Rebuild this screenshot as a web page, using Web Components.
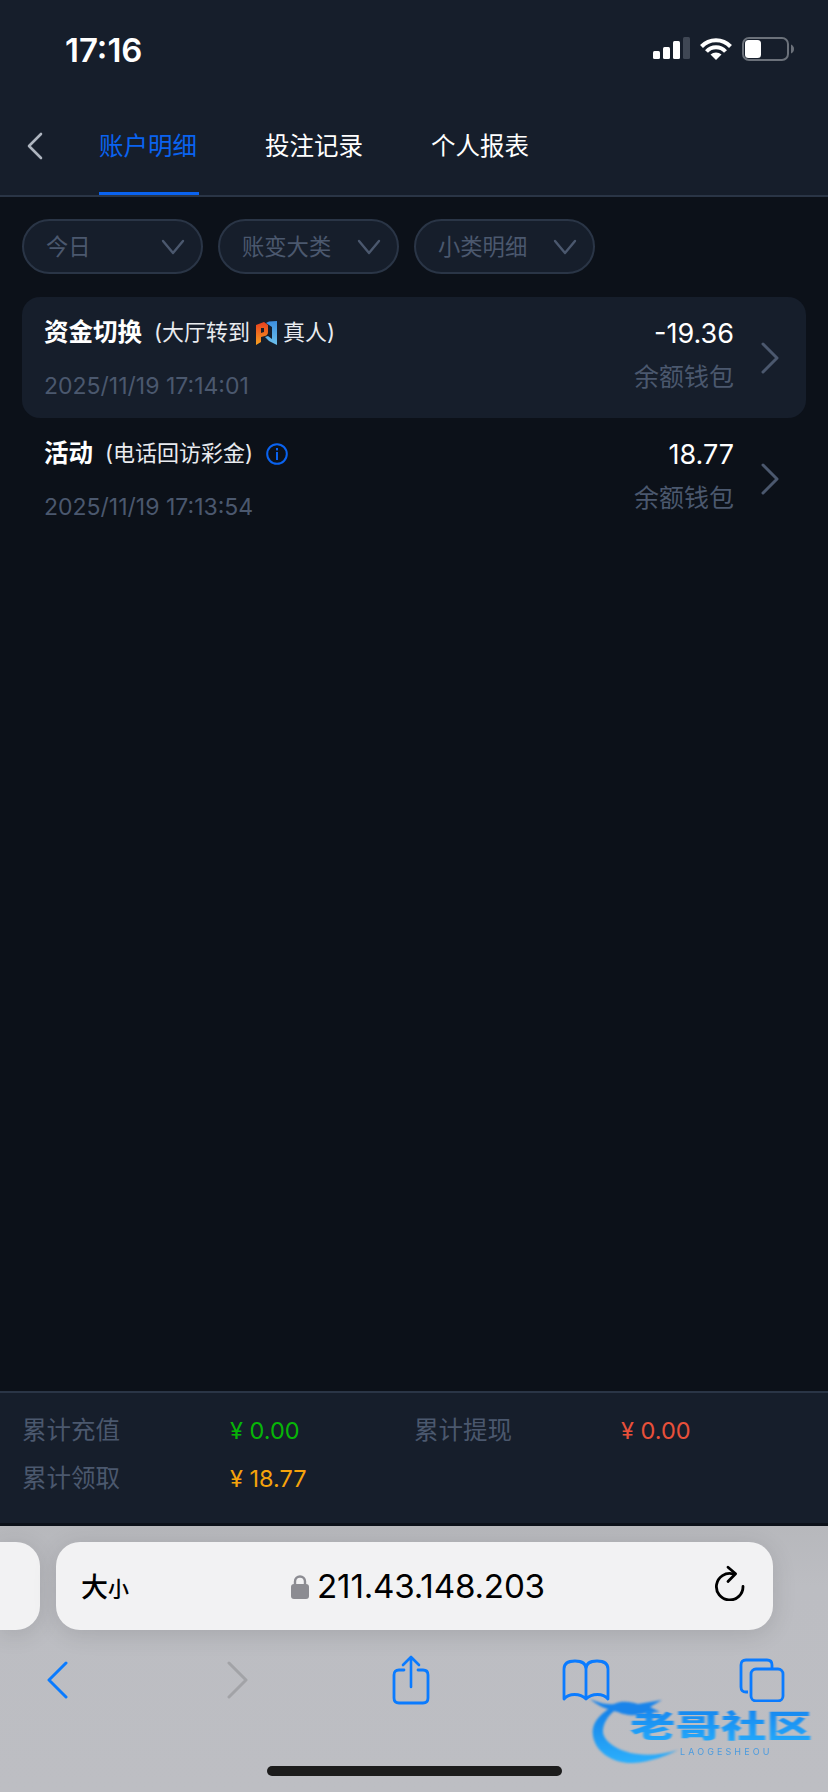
<!DOCTYPE html>
<html lang="zh">
<head>
<meta charset="utf-8">
<title>账户明细</title>
<style>
  html, body { margin: 0; padding: 0; }
  body {
    width: 828px;
    height: 1792px;
    overflow: hidden;
    background: #0c1119;
    color: #fff;
    font-family: Inter, "Noto Sans CJK SC", sans-serif;
  }
  #page { display: flex; flex-direction: column; height: 1792px; }
  #list { display: flex; flex-direction: column; flex: 1; }
</style>
</head>
<body>
<div id="page">
  <status-bar time="17:16"></status-bar>
  <nav-tabs>
    <tab-item active>账户明细</tab-item>
    <tab-item>投注记录</tab-item>
    <tab-item>个人报表</tab-item>
  </nav-tabs>
  <filter-bar>
    <filter-pill>今日</filter-pill>
    <filter-pill>账变大类</filter-pill>
    <filter-pill>小类明细</filter-pill>
  </filter-bar>
  <div id="list">
    <record-row selected title="资金切换" amount="-19.36" wallet="余额钱包" date="2025/11/19 17:14:01">
      <span>(大厅转到</span>
      <game-logo></game-logo>
      <span>真人)</span>
    </record-row>
    <record-row title="活动" amount="18.77" wallet="余额钱包" date="2025/11/19 17:13:54">
      <span>(电话回访彩金)</span>
      <info-icon></info-icon>
    </record-row>
  </div>
  <summary-bar></summary-bar>
  <safari-bar></safari-bar>
</div>

<script>
class StatusBar extends HTMLElement {
  constructor() {
    super();
    this.attachShadow({ mode: "open" });
    this.shadowRoot.innerHTML = `
      <style>
        :host { display: flex; align-items: center; justify-content: space-between; height: 98px; background: #161e2b; padding: 0 33px 0 65px; box-sizing: border-box; }
        .time { font-size: 33px; font-weight: 600; color: #fff; letter-spacing: 0; padding-top: 2px; }
        svg { display: block; }
      </style>
      <div class="time"></div>
      <svg width="142" height="26" viewBox="0 0 142 26">
        <rect x="0" y="15" width="7" height="8" rx="1.5" fill="#fff"/>
        <rect x="10" y="11" width="7" height="12" rx="1.5" fill="#fff"/>
        <rect x="20" y="5" width="7" height="18" rx="1.5" fill="#fff"/>
        <rect x="30" y="1" width="7" height="22" rx="1.5" fill="#3f4754"/>
        <path d="M48.5 10.5 A 20 20 0 0 1 77.5 10.5" fill="none" stroke="#fff" stroke-width="4"/>
        <path d="M53.5 15.5 A 13 13 0 0 1 72.5 15.5" fill="none" stroke="#fff" stroke-width="4"/>
        <path d="M63 24 L57.5 18.6 A 8 8 0 0 1 68.5 18.6 Z" fill="#fff"/>
        <rect x="90" y="2" width="45" height="22" rx="6" fill="none" stroke="#6b717a" stroke-width="2"/>
        <rect x="92" y="4" width="16" height="18" rx="3.5" fill="#fff"/>
        <path d="M138 8.5 Q141 10 141 13 Q141 16 138 17.5 Z" fill="#6b717a"/>
      </svg>`;
  }
  connectedCallback() {
    this.shadowRoot.querySelector(".time").textContent = this.getAttribute("time");
  }
}

class NavTabs extends HTMLElement {
  constructor() {
    super();
    this.attachShadow({ mode: "open" });
    this.shadowRoot.innerHTML = `
      <style>
        :host { display: flex; align-items: stretch; height: 99px; background: #161e2b; border-bottom: 2px solid #2a3546; box-sizing: border-box; padding-left: 26px; }
        svg { display: block; align-self: center; margin: 0 56px 2px 0; }
        .tabs { display: flex; gap: 66px; }
      </style>
      <svg width="17" height="28" viewBox="0 0 17 28"><path d="M15 2 L3 14 L15 26" fill="none" stroke="#aeb5bf" stroke-width="2.6" stroke-linecap="round" stroke-linejoin="round"/></svg>
      <div class="tabs"><slot></slot></div>`;
  }
}

class TabItem extends HTMLElement {
  constructor() {
    super();
    this.attachShadow({ mode: "open" });
    this.shadowRoot.innerHTML = `
      <style>
        :host { display: flex; align-items: center; width: 100px; font-size: 24.5px; color: #fff; box-sizing: border-box; padding-bottom: 2px; border-bottom: 3px solid transparent; white-space: nowrap; }
        :host([active]) { color: #0a63f0; border-bottom-color: #0a63f0; }
      </style>
      <slot></slot>`;
  }
}

class FilterBar extends HTMLElement {
  constructor() {
    super();
    this.attachShadow({ mode: "open" });
    this.shadowRoot.innerHTML = `
      <style>
        :host { display: flex; gap: 15px; padding: 22px 22px 23px; }
      </style>
      <slot></slot>`;
  }
}

class FilterPill extends HTMLElement {
  constructor() {
    super();
    this.attachShadow({ mode: "open" });
    this.shadowRoot.innerHTML = `
      <style>
        :host { display: flex; align-items: center; justify-content: space-between; box-sizing: border-box; width: 181px; height: 55px; padding: 0 16px 0 22px; border: 2px solid #2a3546; border-radius: 27.5px; background: #161e2b; color: #4b586e; font-size: 22.3px; }
        .label { padding-bottom: 4px; }
        svg { display: block; }
      </style>
      <span class="label"><slot></slot></span>
      <svg width="24" height="16" viewBox="0 0 24 16"><path d="M2 2 L12 14 L22 2" fill="none" stroke="#4b586e" stroke-width="2.4" stroke-linecap="round" stroke-linejoin="round"/></svg>`;
  }
}

class RecordRow extends HTMLElement {
  constructor() {
    super();
    this.attachShadow({ mode: "open" });
    this.shadowRoot.innerHTML = `
      <style>
        :host { display: flex; box-sizing: border-box; height: 121px; margin: 0 22px; padding: 18px 26px 0 22px; border-radius: 18px; justify-content: space-between; }
        :host([selected]) { background: #161e2b; }
        .left { display: flex; flex-direction: column; }
        .head { display: flex; align-items: center; height: 30px; color: #fff; font-size: 22px; white-space: nowrap; }
        .title { font-size: 24.5px; font-weight: 700; margin-right: 12px; }
        .sub { display: flex; align-items: center; gap: 6px; color: #e9ebef; }
        .date { margin-top: 26px; line-height: 30px; font-size: 23px; color: #4b586e; }
        .right { display: flex; align-items: flex-start; padding-top: 4px; }
        .values { display: flex; flex-direction: column; align-items: flex-end; }
        .amount { font-size: 27px; line-height: 30px; color: #fff; }
        .wallet { margin-top: 13px; font-size: 25px; line-height: 30px; color: #4b586e; }
        svg { display: block; margin: 23px 0 0 26px; }
      </style>
      <div class="left">
        <div class="head"><span class="title"></span><span class="sub"><slot></slot></span></div>
        <div class="date"></div>
      </div>
      <div class="right">
        <div class="values"><div class="amount"></div><div class="wallet"></div></div>
        <svg width="20" height="32" viewBox="0 0 20 32"><path d="M3 2 L17 16 L3 30" fill="none" stroke="#4b586e" stroke-width="3" stroke-linecap="round" stroke-linejoin="round"/></svg>
      </div>`;
  }
  connectedCallback() {
    const root = this.shadowRoot;
    root.querySelector(".title").textContent = this.getAttribute("title");
    root.querySelector(".amount").textContent = this.getAttribute("amount");
    root.querySelector(".wallet").textContent = this.getAttribute("wallet");
    root.querySelector(".date").textContent = this.getAttribute("date");
    this.removeAttribute("title");
  }
}

class GameLogo extends HTMLElement {
  constructor() {
    super();
    this.attachShadow({ mode: "open" });
    this.shadowRoot.innerHTML = `
      <style>:host { display: block; width: 21px; height: 24px; margin: 5px 0 0 0; } svg { display: block; }</style>
      <svg width="21" height="24" viewBox="0 0 21 24">
        <defs>
          <linearGradient id="o" x1="0" y1="0" x2="0" y2="1"><stop offset="0" stop-color="#e8401f"/><stop offset="1" stop-color="#f6a020"/></linearGradient>
          <linearGradient id="b" x1="0" y1="0" x2="0" y2="1"><stop offset="0" stop-color="#3c8fe0"/><stop offset="1" stop-color="#6cc0ec"/></linearGradient>
        </defs>
        <path d="M0 4 L8 1 L12 4 L12 11 Q12 14 9 15 L5 16 L5 21 L0 24 Z M5 7 L5 12 L8 11 L8 7 Z" fill="url(#o)" fill-rule="evenodd"/>
        <path d="M21 0 L21 24 L13 20 L9 16 L12 15 L16 18 L16 6 L10 2 L13 0.5 Z" fill="url(#b)"/>
      </svg>`;
  }
}

class InfoIcon extends HTMLElement {
  constructor() {
    super();
    this.attachShadow({ mode: "open" });
    this.shadowRoot.innerHTML = `
      <style>:host { display: block; width: 22px; height: 22px; margin: 5px 0 0 7px; } svg { display: block; }</style>
      <svg width="22" height="22" viewBox="0 0 22 22">
        <circle cx="11" cy="11" r="9.8" fill="none" stroke="#0a63f0" stroke-width="2"/>
        <rect x="10" y="5" width="2" height="2.4" fill="#0a63f0"/>
        <rect x="10" y="9" width="2" height="8" fill="#0a63f0"/>
      </svg>`;
  }
}

class SummaryBar extends HTMLElement {
  constructor() {
    super();
    this.attachShadow({ mode: "open" });
    const items = [
      ["累计充值", "¥ 0.00", "#07b507"],
      ["累计提现", "¥ 0.00", "#e8503a"],
      ["累计领取", "¥ 18.77", "#f5a30c"],
    ];
    this.shadowRoot.innerHTML = `
      <style>
        :host { display: grid; grid-template-columns: 208px 184px 207px 1fr; grid-auto-rows: 48px; align-items: center; box-sizing: border-box; height: 135px; padding: 11px 0 0 22px; background: #161e2b; border-top: 2px solid #2a3546; border-bottom: 3px solid #0c1119; font-size: 24.5px; }
        .label { color: #4b586e; }
        .value { font-size: 23.5px; padding-top: 4px; }
      </style>
      ${items.map(([label, value, color]) => `
        <div class="label">${label}</div>
        <div class="value" style="color:${color}">${value}</div>`).join("")}`;
  }
}

class SafariBar extends HTMLElement {
  constructor() {
    super();
    this.attachShadow({ mode: "open" });
    this.shadowRoot.innerHTML = `
      <style>
        :host { display: block; position: relative; box-sizing: border-box; height: 266px; padding-top: 16px; background: linear-gradient(#b7b8bc, #bcbdc2 60px, #bdbec3); color: #000; overflow: hidden; }
        .row { display: flex; gap: 16px; }
        .prev { width: 40px; height: 88px; background: #f2f2f3; border-radius: 0 24px 24px 0; box-shadow: 0 4px 24px rgba(0,0,0,.12); }
        .url { display: flex; align-items: center; justify-content: space-between; box-sizing: border-box; width: 717px; height: 88px; padding: 0 28px 0 25px; background: #f2f2f3; border-radius: 24px; box-shadow: 0 4px 24px rgba(0,0,0,.12); }
        .size { display: flex; align-items: flex-end; font-weight: 500; font-size: 27px; line-height: 32px; width: 50px; font-family: "Noto Sans CJK SC", sans-serif; }
        .size small { font-size: 21px; line-height: 30px; }
        .addr { display: flex; align-items: center; gap: 8px; font-size: 33.2px; letter-spacing: -0.2px; margin-left: -8px; }
        .reload { margin-bottom: 7px; }
        .tools { display: flex; gap: 119px; margin: 25px 0 0 29px; }
        .tools > div { width: 56px; height: 50px; display: flex; justify-content: center; align-items: center; }
        .tools .fwd { margin-left: 6px; }
        .tools .share { margin-left: -2px; }
        .tools .tabs { margin-left: 1px; }
        .home { width: 295px; height: 10px; margin: 61px 0 0 267px; border-radius: 5px; background: #1c1c1c; }
        svg { display: block; }
      </style>
      <div class="row">
        <div class="prev"></div>
        <div class="url">
          <div class="size">大<small>小</small></div>
          <div class="addr">
            <svg width="18" height="25" viewBox="0 0 18 25"><path d="M4 12 V7.5 A5 5 0 0 1 14 7.5 V12" fill="none" stroke="#8c8c92" stroke-width="2.4"/><rect x="0" y="10" width="18" height="15" rx="3" fill="#8c8c92"/></svg>
            <span>211.43.148.203</span>
          </div>
          <svg class="reload" width="32" height="36" viewBox="0 0 32 36"><path d="M20 8.8 A13.3 13.3 0 1 0 30 21.5" fill="none" stroke="#000" stroke-width="2.8" stroke-linecap="round"/><path d="M15 2.2 L22.6 8.8 L15 16.5" fill="none" stroke="#000" stroke-width="2.8" stroke-linecap="round" stroke-linejoin="round"/></svg>
        </div>
      </div>
      <div class="tools">
        <div><svg width="22" height="38" viewBox="0 0 22 38"><path d="M20 2 L3 19 L20 36" fill="none" stroke="#0a7bff" stroke-width="3" stroke-linecap="round" stroke-linejoin="round"/></svg></div>
        <div class="fwd"><svg width="22" height="38" viewBox="0 0 22 38"><path d="M2 2 L19 19 L2 36" fill="none" stroke="#a2a3a7" stroke-width="3" stroke-linecap="round" stroke-linejoin="round"/></svg></div>
        <div class="share"><svg width="38" height="50" viewBox="0 0 38 50"><path d="M12 15 H7 Q2 15 2 20 V43 Q2 48 7 48 H31 Q36 48 36 43 V20 Q36 15 31 15 H26" fill="none" stroke="#0a7bff" stroke-width="2.8" stroke-linecap="round"/><path d="M19 32 V2 M11 10 L19 2 L27 10" fill="none" stroke="#0a7bff" stroke-width="2.6" stroke-linecap="round" stroke-linejoin="round"/></svg></div>
        <div><svg width="48" height="42" viewBox="0 0 48 42"><path d="M24 10 C24 4 19 2 13 2 C7 2 2 4 2 10 V40 C7 34 18 34 24 40 C30 34 41 34 46 40 V10 C46 4 41 2 35 2 C29 2 24 4 24 10 V40" fill="none" stroke="#0a7bff" stroke-width="2.8" stroke-linejoin="round" stroke-linecap="round"/></svg></div>
        <div class="tabs"><svg width="46" height="44" viewBox="0 0 46 44"><path d="M9 34 H7 Q2 34 2 29 V7 Q2 2 7 2 H28 Q33 2 33 7 V10" fill="none" stroke="#0a7bff" stroke-width="2.8"/><rect x="12" y="11" width="32" height="32" rx="5" fill="none" stroke="#0a7bff" stroke-width="2.8"/></svg></div>
      </div>
      <div class="home"></div>
      <watermark-logo></watermark-logo>`;
  }
}

// community watermark that lies over the toolbar
class WatermarkLogo extends HTMLElement {
  constructor() {
    super();
    this.attachShadow({ mode: "open" });
    this.shadowRoot.innerHTML = `
      <style>
        :host { display: block; position: absolute; left: 590px; top: 170px; width: 226px; height: 72px; }
        svg { position: absolute; left: 0; top: 0; filter: blur(1px); }
        .name { position: absolute; left: 40px; top: 10px; width: 184px; font-family: "Noto Sans CJK SC", sans-serif; font-weight: 900; font-size: 45.5px; line-height: 52px; white-space: nowrap; transform: scaleY(.68); transform-origin: 0 0; background: linear-gradient(#1684ee, #23a8fb); -webkit-background-clip: text; background-clip: text; color: transparent; filter: blur(.9px); }
        .latin { position: absolute; left: 90px; top: 51px; font-family: Inter, sans-serif; font-size: 9px; line-height: 10px; letter-spacing: 3.1px; color: #4b9bdf; filter: blur(.4px); white-space: nowrap; }
      </style>
      <svg width="100" height="72" viewBox="0 0 100 72">
        <defs><linearGradient id="d" x1="0" y1="0" x2="0" y2="1"><stop offset="0" stop-color="#1480e8"/><stop offset="1" stop-color="#2cb0fc"/></linearGradient></defs>
        <path d="M20 12 C8 20 1 28 3 40 C6 58 26 68 43 67 C60 66 76 60 88 54 C74 58 60 60 47 58 C30 56 12 46 13 34 C14 26 18 20 24 15 Z" fill="url(#d)"/>
        <path d="M0 3 C8 6 14 9 24 8 C32 4 42 6 48 8 L72 4 L60 11 L70 16 L56 17 C46 20 36 20 28 16 C18 14 8 10 0 3 Z" fill="#1a84ea"/>
      </svg>
      <div class="name">老哥社区</div>
      <div class="latin">LAOGESHEOU</div>`;
  }
}

customElements.define("status-bar", StatusBar);
customElements.define("nav-tabs", NavTabs);
customElements.define("tab-item", TabItem);
customElements.define("filter-bar", FilterBar);
customElements.define("filter-pill", FilterPill);
customElements.define("record-row", RecordRow);
customElements.define("game-logo", GameLogo);
customElements.define("info-icon", InfoIcon);
customElements.define("summary-bar", SummaryBar);
customElements.define("safari-bar", SafariBar);
customElements.define("watermark-logo", WatermarkLogo);
</script>
</body>
</html>
